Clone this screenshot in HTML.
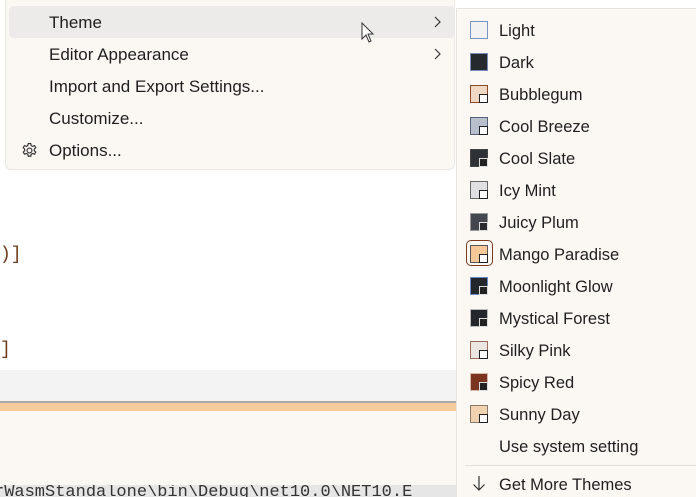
<!DOCTYPE html>
<html><head><meta charset="utf-8"><style>
*{margin:0;padding:0;box-sizing:border-box}
body{width:696px;height:497px;overflow:hidden;background:#fff;font-family:"Segoe UI","Liberation Sans",sans-serif;font-size:16px;color:#1f1f1f;position:relative}
.abs{position:absolute}
.menu{left:5px;top:0;width:450px;height:170px;background:#fbf8f4;border:1px solid #ebe7e2;border-top:none;border-radius:0 0 6px 6px}
.mi{position:absolute;left:43px;font-size:17px}
.sub{left:456px;top:8px;width:240px;height:489px;background:#fbf8f4;border-left:1px solid #e6e2dd;border-top:1px solid #e6e2dd}
.it{position:absolute;left:42px;font-size:16.5px;margin-top:2px}
.ic{position:absolute;left:13px;width:18px;height:18px;border:1px solid #555}
.ic i{position:absolute;right:-1px;bottom:-1px;width:9px;height:9px;border:1px solid #222;background:#fff}
</style></head><body>
<div class="abs" style="left:0;top:245px;font-family:'Liberation Mono',monospace;color:#6b3a1a;font-size:18px">)]</div>
<div class="abs" style="left:0;top:340px;font-family:'Liberation Mono',monospace;color:#6b3a1a;font-size:18px">]</div>
<div class="abs" style="left:0;top:370px;width:456px;height:31px;background:#f3f3f3"></div>
<div class="abs" style="left:0;top:401px;width:456px;height:2px;background:#a8a8a8"></div>
<div class="abs" style="left:0;top:403px;width:456px;height:8px;background:#f5cb9c"></div>
<div class="abs" style="left:0;top:411px;width:456px;height:75px;background:#fbf8f4"></div>
<div class="abs" style="left:0;top:485px;width:456px;height:12px;background:#e6e6e6;overflow:hidden"><div style="font-family:'Liberation Mono',monospace;font-size:17px;color:#333;margin-top:-2px;margin-left:-6px;white-space:nowrap">rWasmStandalone\bin\Debug\net10.0\NET10.E</div></div>

<div class="abs menu">
<div class="abs" style="left:3px;top:6px;width:446px;height:32px;background:#ecebe9;border-radius:5px"></div>
<div class="mi" style="top:13px">Theme</div>
<div class="mi" style="top:45px">Editor Appearance</div>
<div class="mi" style="top:77px">Import and Export Settings...</div>
<div class="mi" style="top:109px">Customize...</div>
<div class="mi" style="top:141px">Options...</div>
<svg class="abs" style="left:427px;top:16px" width="8" height="12" viewBox="0 0 8 12"><path d="M2 1l5 5-5 5" fill="none" stroke="#333" stroke-width="1.2"/></svg>
<svg class="abs" style="left:427px;top:48px" width="8" height="12" viewBox="0 0 8 12"><path d="M2 1l5 5-5 5" fill="none" stroke="#333" stroke-width="1.2"/></svg>
<svg class="abs" style="left:15px;top:142px" width="17" height="17" viewBox="0 0 16 16"><circle cx="8" cy="8" r="2.3" fill="none" stroke="#333" stroke-width="1.1"/><path d="M6.8 1.5h2.4l.4 1.9 1.3.7 1.8-.7 1.2 2-1.4 1.3v1.5l1.4 1.3-1.2 2-1.8-.7-1.3.7-.4 1.9H6.8l-.4-1.9-1.3-.7-1.8.7-1.2-2 1.4-1.3V6.7L2.1 5.4l1.2-2 1.8.7 1.3-.7z" fill="none" stroke="#333" stroke-width="1.1" stroke-linejoin="round"/></svg>
<svg class="abs" style="left:355px;top:22px" width="14" height="22" viewBox="0 0 14 22"><path d="M1 1v16l4-4 3 7 2-1-3-7h5z" fill="#fff" stroke="#333" stroke-width="1"/></svg>
</div>

<div class="abs sub">
<div class="ic" style="top:12px;background:#f2f2f2;border-color:#7d95c6"></div><div class="it" style="top:11px">Light</div>
<div class="ic" style="top:44px;background:#262a2e;border-color:#7a8ab8"></div><div class="it" style="top:43px">Dark</div>
<div class="ic" style="top:76px;background:#f0d8c4;border-color:#8a4a2a"><i></i></div><div class="it" style="top:75px">Bubblegum</div>
<div class="ic" style="top:108px;background:#b8c0cc;border-color:#55607a"><i></i></div><div class="it" style="top:107px">Cool Breeze</div>
<div class="ic" style="top:140px;background:#2e3236;border-color:#444"><i style="background:#222;border-color:#ddd"></i></div><div class="it" style="top:139px">Cool Slate</div>
<div class="ic" style="top:172px;background:#e0e0e2;border-color:#666"><i></i></div><div class="it" style="top:171px">Icy Mint</div>
<div class="ic" style="top:204px;background:#44484e;border-color:#999"><i style="background:#2a2a2e;border-color:#ddd"></i></div><div class="it" style="top:203px">Juicy Plum</div>
<div class="abs" style="left:9px;top:231px;width:27px;height:26px;border:1.5px solid #7a3a22;border-radius:5px"></div>
<div class="ic" style="top:236px;background:#f5c899;border-color:#555"><i></i></div><div class="it" style="top:235px">Mango Paradise</div>
<div class="ic" style="top:268px;background:#22272c;border-color:#6f86c4"><i style="background:#222;border-color:#ddd"></i></div><div class="it" style="top:267px">Moonlight Glow</div>
<div class="ic" style="top:300px;background:#24282c;border-color:#bbb"><i style="background:#222;border-color:#ddd"></i></div><div class="it" style="top:299px">Mystical Forest</div>
<div class="ic" style="top:332px;background:#ece6e2;border-color:#9a6a5a"><i></i></div><div class="it" style="top:331px">Silky Pink</div>
<div class="ic" style="top:364px;background:#7a3420;border-color:#d8b8a8"><i style="background:#222;border-color:#ddd"></i></div><div class="it" style="top:363px">Spicy Red</div>
<div class="ic" style="top:396px;background:#f1d2b0;border-color:#8a7a6a"><i></i></div><div class="it" style="top:395px">Sunny Day</div>
<div class="it" style="top:427px">Use system setting</div>
<div class="abs" style="left:8px;top:456px;width:232px;height:1px;background:#e3dfda"></div>
<svg class="abs" style="left:15px;top:466px" width="14" height="16" viewBox="0 0 14 16"><path d="M7 1v14M1.5 9.5 7 15l5.5-5.5" fill="none" stroke="#333" stroke-width="1.2"/></svg>
<div class="it" style="top:465px">Get More Themes</div>
</div>
</body></html>
